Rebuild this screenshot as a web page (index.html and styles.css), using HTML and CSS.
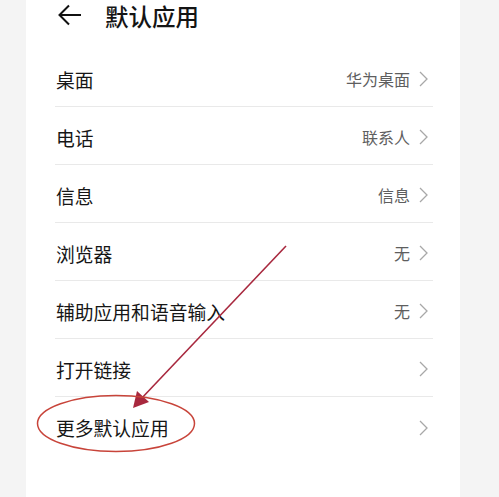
FILE: index.html
```html
<!DOCTYPE html>
<html lang="zh">
<head>
<meta charset="utf-8">
<link rel="stylesheet" href="styles.css">
</head>
<body>
<div class="panel">
  <header class="header">
    <svg class="back" viewBox="0 0 24 22" width="24" height="22"><path d="M23 11H2M11 1.5L1.5 11L11 20.5" fill="none" stroke="#111" stroke-width="2"/></svg>
    <h1 class="title">默认应用</h1>
  </header>
  <ul class="list">
    <li class="row"><span class="label">桌面</span><span class="value">华为桌面</span><svg class="chev" viewBox="0 0 9 16" width="9" height="16"><path d="M1 1L8 8L1 15" fill="none" stroke="#a8a8a8" stroke-width="1.3"/></svg></li>
    <li class="row"><span class="label">电话</span><span class="value">联系人</span><svg class="chev" viewBox="0 0 9 16" width="9" height="16"><path d="M1 1L8 8L1 15" fill="none" stroke="#a8a8a8" stroke-width="1.3"/></svg></li>
    <li class="row"><span class="label">信息</span><span class="value">信息</span><svg class="chev" viewBox="0 0 9 16" width="9" height="16"><path d="M1 1L8 8L1 15" fill="none" stroke="#a8a8a8" stroke-width="1.3"/></svg></li>
    <li class="row"><span class="label">浏览器</span><span class="value">无</span><svg class="chev" viewBox="0 0 9 16" width="9" height="16"><path d="M1 1L8 8L1 15" fill="none" stroke="#a8a8a8" stroke-width="1.3"/></svg></li>
    <li class="row"><span class="label">辅助应用和语音输入</span><span class="value">无</span><svg class="chev" viewBox="0 0 9 16" width="9" height="16"><path d="M1 1L8 8L1 15" fill="none" stroke="#a8a8a8" stroke-width="1.3"/></svg></li>
    <li class="row"><span class="label">打开链接</span><span class="value"></span><svg class="chev" viewBox="0 0 9 16" width="9" height="16"><path d="M1 1L8 8L1 15" fill="none" stroke="#a8a8a8" stroke-width="1.3"/></svg></li>
    <li class="row last"><span class="label">更多默认应用</span><span class="value"></span><svg class="chev" viewBox="0 0 9 16" width="9" height="16"><path d="M1 1L8 8L1 15" fill="none" stroke="#a8a8a8" stroke-width="1.3"/></svg></li>
  </ul>
</div>
<svg class="annot" viewBox="0 0 499 497" width="499" height="497">
  <line x1="286" y1="246" x2="140" y2="400" stroke="#a8283e" stroke-width="1.6"/>
  <path d="M133 408L137 391L149 402Z" fill="#a8283e"/>
  <ellipse cx="116" cy="423.5" rx="78.5" ry="28" fill="none" stroke="#c8443a" stroke-width="1.5"/>
</svg>
</body>
</html>
```
FILE: styles.css
```css
html, body {
  margin: 0;
  padding: 0;
}
body {
  width: 499px;
  height: 497px;
  overflow: hidden;
  background: #f4f4f4;
  font-family: "Noto Sans CJK SC", "Noto Sans", sans-serif;
  position: relative;
}
.panel {
  margin-left: 26px;
  width: 434px;
  height: 497px;
  background: #fff;
}
.header {
  height: 49px;
  display: flex;
  align-items: flex-start;
  padding-left: 32px;
  box-sizing: border-box;
}
.back {
  margin-top: 4px;
  flex: none;
}
.title {
  margin: 0 0 0 23px;
  font-size: 23.5px;
  font-weight: 500;
  line-height: 32px;
  color: #141414;
}
.list {
  list-style: none;
  margin: 0;
  padding: 0 27px 0 29px;
}
.row {
  height: 58px;
  display: flex;
  align-items: center;
  border-bottom: 1px solid #e9e9e9;
  box-sizing: border-box;
  padding-top: 3px;
}
.row.last {
  border-bottom: none;
}
.label {
  flex: 1;
  font-size: 18.8px;
  color: #161616;
  padding-left: 1px;
}
.value {
  font-size: 16px;
  color: #5e5e5e;
}
.chev {
  margin-left: 9px;
  margin-right: 5px;
  flex: none;
}
.annot {
  position: absolute;
  left: 0;
  top: 0;
  pointer-events: none;
}
```
